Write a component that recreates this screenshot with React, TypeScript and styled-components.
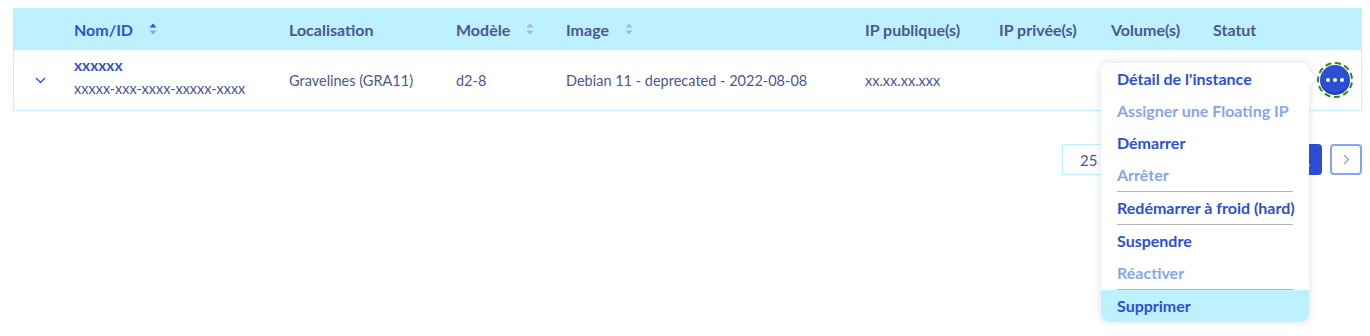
import React from 'react';
import styled, { createGlobalStyle } from 'styled-components';

const GlobalStyle = createGlobalStyle`
  * { box-sizing: border-box; }
  body {
    margin: 0;
    background: #ffffff;
    font-family: Lato, "Open Sans", sans-serif;
    color: #4d5693;
  }
`;

const Page = styled.div`
  padding: 8px 8px 0 13px;
  height: 336px;
  overflow: hidden;
`;

const Grid = styled.div`
  display: grid;
  grid-template-columns: 60px 215px 167px 110px 299px 134px 112px 102px 1fr 62px;
  border: 1px solid #bef1ff;
  border-top: none;
`;

const HeadCell = styled.div<{ $active?: boolean }>`
  height: 42px;
  background: #bef1ff;
  display: flex;
  align-items: center;
  gap: 16px;
  font-size: 16px;
  font-weight: 700;
  color: ${(p) => (p.$active ? '#2c55d4' : '#4d5693')};
  white-space: nowrap;
`;

const Cell = styled.div`
  height: 60px;
  display: flex;
  flex-direction: column;
  justify-content: center;
  font-size: 14.5px;
  white-space: nowrap;
  position: relative;
`;

const ToggleCell = styled(Cell)`
  align-items: center;
  padding-right: 8px;
`;

const InstanceName = styled.a`
  font-size: 15.5px;
  font-weight: 700;
  color: #2c55d4;
  text-decoration: none;
  margin-top: -8px;
  margin-bottom: 6px;
`;

const ActionCell = styled(Cell)`
  align-items: flex-end;
  padding-right: 11px;
`;

const ActionWrap = styled.div`
  position: relative;
  margin-top: -1px;
`;

const DotsButton = styled.button`
  width: 30px;
  height: 30px;
  border-radius: 50%;
  border: none;
  background: #2d4fd6;
  box-shadow: inset 0 -2px 0 rgba(0, 20, 110, 0.35);
  outline: 2px dashed #2f8a1c;
  outline-offset: 1px;
  display: flex;
  align-items: center;
  justify-content: center;
  gap: 3px;
  padding: 0;
  cursor: pointer;
`;

const Dot = styled.span`
  width: 4px;
  height: 4px;
  border-radius: 50%;
  background: #ffffff;
`;

const Menu = styled.div`
  position: absolute;
  top: -2px;
  right: calc(100% + 11px);
  width: 208px;
  background: #ffffff;
  border-radius: 8px;
  box-shadow: 0 0 8px rgba(40, 50, 160, 0.16);
  z-index: 5;

  &::after {
    content: '';
    position: absolute;
    top: 10px;
    right: -6px;
    width: 10px;
    height: 10px;
    background: #ffffff;
    transform: rotate(45deg);
    box-shadow: 2px -2px 4px rgba(40, 50, 160, 0.08);
  }
`;

const MenuList = styled.div`
  border-radius: 8px;
  overflow: hidden;
  position: relative;
  z-index: 1;
  background: #ffffff;
`;

const MenuItem = styled.div<{ $disabled?: boolean; $hover?: boolean }>`
  height: 32px;
  padding: 0 16px;
  display: flex;
  align-items: center;
  font-size: 16px;
  font-weight: 700;
  white-space: nowrap;
  color: ${(p) => (p.$disabled ? '#86a6ec' : '#2c4fd6')};
  background: ${(p) => (p.$hover ? '#bef1ff' : 'transparent')};
`;

const Separator = styled.div`
  height: 1px;
  margin: 0 16px;
  background: #b4b4b4;
`;

const Pager = styled.div`
  display: flex;
  justify-content: flex-end;
  align-items: center;
  gap: 8px;
  margin-top: 33px;
`;

const PageSize = styled.div`
  width: 80px;
  height: 31px;
  border: 1px solid #bef1ff;
  display: flex;
  align-items: center;
  padding-left: 17px;
  font-size: 15px;
  color: #4d5693;
`;

const PagerText = styled.span`
  font-size: 15px;
  margin: 0 38px 0 8px;
`;

const PageButton = styled.button<{ $current?: boolean }>`
  width: 32px;
  height: 31px;
  border-radius: 4px;
  border: 2px solid ${(p) => (p.$current ? '#2d4fd6' : '#86a6ec')};
  background: ${(p) => (p.$current ? '#2d4fd6' : '#ffffff')};
  color: ${(p) => (p.$current ? '#ffffff' : '#86a6ec')};
  display: flex;
  align-items: center;
  justify-content: center;
  font-family: inherit;
  font-size: 15px;
  font-weight: 700;
  padding: 0;
`;

const SortIcon = ({ active }: { active?: boolean }) => (
  <svg width="8" height="12" viewBox="0 0 8 12">
    <path d="M4 0.5 L7.5 4.5 H0.5 Z" fill={active ? '#2c55d4' : '#a9b3d6'} />
    <path d="M4 11.5 L7.5 7.5 H0.5 Z" fill={active ? '#86a6ec' : '#a9b3d6'} />
  </svg>
);

const Chevron = () => (
  <svg width="11" height="7" viewBox="0 0 11 7">
    <path d="M1 1 L5.5 5.5 L10 1" fill="none" stroke="#2c55d4" strokeWidth="1.4" />
  </svg>
);

const ChevronRight = () => (
  <svg width="7" height="11" viewBox="0 0 7 11">
    <path d="M1 1 L5.5 5.5 L1 10" fill="none" stroke="#86a6ec" strokeWidth="1.4" />
  </svg>
);

const menu = [
  { label: "Détail de l'instance" },
  { label: 'Assigner une Floating IP', disabled: true },
  { label: 'Démarrer' },
  { label: 'Arrêter', disabled: true, sep: true },
  { label: 'Redémarrer à froid (hard)', sep: true },
  { label: 'Suspendre' },
  { label: 'Réactiver', disabled: true, sep: true },
  { label: 'Supprimer', hover: true },
];

const App: React.FC = () => {
  return (
    <Page>
      <GlobalStyle />
      <Grid>
        <HeadCell />
        <HeadCell $active>
          Nom/ID <SortIcon active />
        </HeadCell>
        <HeadCell>Localisation</HeadCell>
        <HeadCell>
          Modèle <SortIcon />
        </HeadCell>
        <HeadCell>
          Image <SortIcon />
        </HeadCell>
        <HeadCell>IP publique(s)</HeadCell>
        <HeadCell>IP privée(s)</HeadCell>
        <HeadCell>Volume(s)</HeadCell>
        <HeadCell>Statut</HeadCell>
        <HeadCell />

        <ToggleCell>
          <Chevron />
        </ToggleCell>
        <Cell>
          <InstanceName href="#">xxxxxx</InstanceName>
          <span>xxxxx-xxx-xxxx-xxxxx-xxxx</span>
        </Cell>
        <Cell>Gravelines (GRA11)</Cell>
        <Cell>d2-8</Cell>
        <Cell>Debian 11 - deprecated - 2022-08-08</Cell>
        <Cell>xx.xx.xx.xxx</Cell>
        <Cell />
        <Cell />
        <Cell />
        <ActionCell>
          <ActionWrap>
            <DotsButton aria-label="Actions">
              <Dot />
              <Dot />
              <Dot />
            </DotsButton>
            <Menu>
              <MenuList>
                {menu.map((m) => (
                  <React.Fragment key={m.label}>
                    <MenuItem $disabled={m.disabled} $hover={m.hover}>
                      {m.label}
                    </MenuItem>
                    {m.sep && <Separator />}
                  </React.Fragment>
                ))}
              </MenuList>
            </Menu>
          </ActionWrap>
        </ActionCell>
      </Grid>
      <Pager>
        <PageSize>25</PageSize>
        <PagerText>sur 1 résultat</PagerText>
        <PageButton $current>1</PageButton>
        <PageButton>
          <ChevronRight />
        </PageButton>
      </Pager>
    </Page>
  );
};

export default App;
